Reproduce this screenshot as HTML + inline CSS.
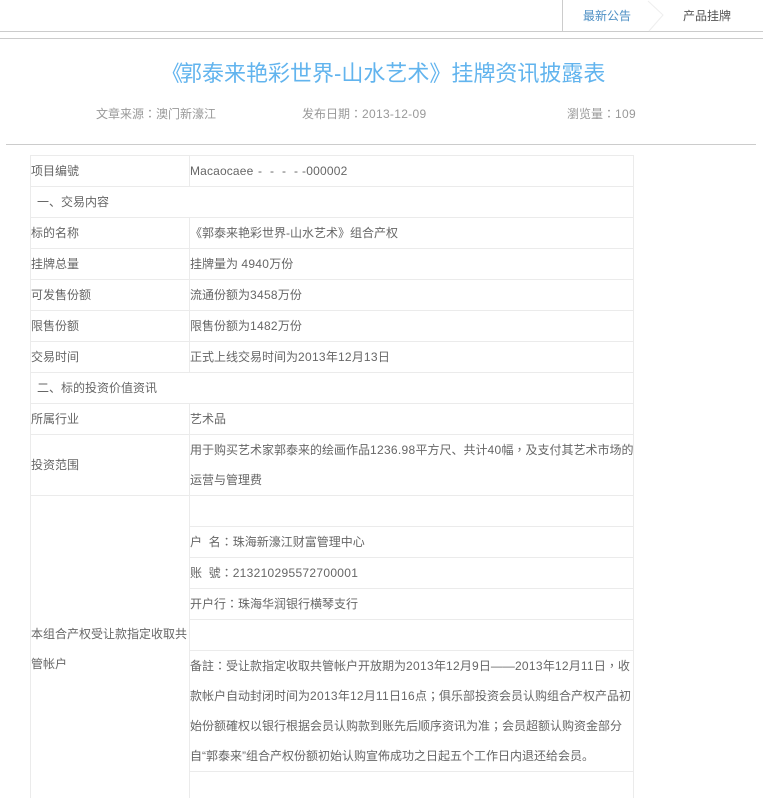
<!DOCTYPE html>
<html><head><meta charset="utf-8"><style>
html,body{margin:0;padding:0;background:#fff;width:763px;height:798px;overflow:hidden}
body{position:relative;font-family:"Liberation Sans","Noto Sans CJK SC",sans-serif;font-size:12px;color:#666}
.t{position:absolute;white-space:nowrap;line-height:18px;height:18px}
.h{position:absolute;background:#ebebeb;height:1px}
.v{position:absolute;background:#ebebeb;width:1px}
.g{position:absolute;background:#ccc}
.p{font-family:"Noto Sans CJK TC",sans-serif}
.d{letter-spacing:.3px}
</style></head><body>
<div class="g" style="left:0;top:31px;width:763px;height:1px"></div>
<div class="g" style="left:0;top:38px;width:763px;height:1px"></div>
<div class="g" style="left:562px;top:0;width:1px;height:31px"></div>
<svg style="position:absolute;left:645px;top:0" width="22" height="32"><path d="M3 1L18 15L4 31" fill="none" stroke="#eee"/></svg>
<div class="t" style="left:583px;top:7px;color:#4d8fc4">最新公告</div>
<div class="t" style="left:683px;top:7px;color:#555">产品挂牌</div>
<div class="t" style="left:161px;top:57px;height:34px;line-height:34px;font-size:22px;color:#62b4ee">《</div>
<div class="t" style="left:180px;top:57px;height:34px;line-height:34px;font-size:22px;color:#62b4ee">郭泰来艳彩世界-山水艺术》挂牌资讯披露表</div>
<div class="t" style="left:96px;top:105px;color:#999">文章来源<span class="p">：</span>澳门新濠江</div>
<div class="t" style="left:302px;top:105px;color:#999">发布日期<span class="p">：</span><span class="d">2013-12-09</span></div>
<div class="t" style="left:567px;top:105px;color:#999">瀏览量<span class="p">：</span><span class="d">109</span></div>
<div class="g" style="left:6px;top:144px;width:750px;height:1px"></div>

<div class="h" style="left:30px;top:155px;width:604px"></div>
<div class="h" style="left:30px;top:186px;width:604px"></div>
<div class="h" style="left:30px;top:217px;width:604px"></div>
<div class="h" style="left:30px;top:248px;width:604px"></div>
<div class="h" style="left:30px;top:279px;width:604px"></div>
<div class="h" style="left:30px;top:310px;width:604px"></div>
<div class="h" style="left:30px;top:341px;width:604px"></div>
<div class="h" style="left:30px;top:372px;width:604px"></div>
<div class="h" style="left:30px;top:403px;width:604px"></div>
<div class="h" style="left:30px;top:434px;width:604px"></div>
<div class="h" style="left:30px;top:495px;width:604px"></div>
<div class="h" style="left:189px;top:526px;width:445px"></div>
<div class="h" style="left:189px;top:557px;width:445px"></div>
<div class="h" style="left:189px;top:588px;width:445px"></div>
<div class="h" style="left:189px;top:619px;width:445px"></div>
<div class="h" style="left:189px;top:650px;width:445px"></div>
<div class="h" style="left:189px;top:771px;width:445px"></div>
<div class="v" style="left:30px;top:155px;height:643px"></div>
<div class="v" style="left:633px;top:155px;height:643px"></div>
<div class="v" style="left:189px;top:155px;height:31px"></div>
<div class="v" style="left:189px;top:217px;height:155px"></div>
<div class="v" style="left:189px;top:403px;height:395px"></div>

<div class="t" style="left:31px;top:162px">项目编號</div>
<div class="t" style="left:190px;top:162px;letter-spacing:.15px">Macaocaee</div>
<div class="t" style="left:258px;top:162px">-</div>
<div class="t" style="left:270px;top:162px">-</div>
<div class="t" style="left:282px;top:162px">-</div>
<div class="t" style="left:294px;top:162px">-</div>
<div class="t" style="left:302px;top:162px;letter-spacing:.2px">-000002</div>
<div class="t" style="left:37px;top:193px">一、交易内容</div>
<div class="t" style="left:31px;top:224px">标的名称</div>
<div class="t" style="left:190px;top:224px">《郭泰来艳彩世界-山水艺术》组合产权</div>
<div class="t" style="left:31px;top:255px">挂牌总量</div>
<div class="t" style="left:190px;top:255px">挂牌量为 <span class="d">4940</span>万份</div>
<div class="t" style="left:31px;top:286px">可发售份额</div>
<div class="t" style="left:190px;top:286px">流通份额为<span class="d">3458</span>万份</div>
<div class="t" style="left:31px;top:317px">限售份额</div>
<div class="t" style="left:190px;top:317px">限售份额为<span class="d">1482</span>万份</div>
<div class="t" style="left:31px;top:348px">交易时间</div>
<div class="t" style="left:190px;top:348px">正式上线交易时间为<span class="d">2013</span>年<span class="d">12</span>月<span class="d">13</span>日</div>
<div class="t" style="left:37px;top:379px">二、标的投资价值资讯</div>
<div class="t" style="left:31px;top:410px">所属行业</div>
<div class="t" style="left:190px;top:410px">艺术品</div>
<div class="t" style="left:31px;top:456px">投资范围</div>
<div class="t" style="left:190px;top:441px">用于购买艺术家郭泰来的绘画作品<span class="d">1236.98</span>平方尺、共计<span class="d">40</span>幅<span class="p">，</span>及支付其艺术市场的</div>
<div class="t" style="left:190px;top:471px">运营与管理费</div>
<div class="t" style="left:190px;top:533px">户 &nbsp;名<span class="p">：</span>珠海新濠江财富管理中心</div>
<div class="t" style="left:190px;top:564px">账 &nbsp;號<span class="p">：</span><span class="d">213210295572700001</span></div>
<div class="t" style="left:190px;top:595px">开户行<span class="p">：</span>珠海华润银行横琴支行</div>
<div class="t" style="left:31px;top:625px">本组合产权受让款指定收取共</div>
<div class="t" style="left:31px;top:655px">管帐户</div>
<div class="t" style="left:190px;top:657px">备註<span class="p">：</span>受让款指定收取共管帐户开放期为<span class="d">2013</span>年<span class="d">12</span>月<span class="d">9</span>日——<span class="d">2013</span>年<span class="d">12</span>月<span class="d">11</span>日<span class="p">，</span>收</div>
<div class="t" style="left:190px;top:687px">款帐户自动封闭时间为<span class="d">2013</span>年<span class="d">12</span>月<span class="d">11</span>日<span class="d">16</span>点<span class="p">；</span>俱乐部投资会员认购组合产权产品初</div>
<div class="t" style="left:190px;top:717px">始份额確权以银行根据会员认购款到账先后顺序资讯为准<span class="p">；</span>会员超额认购资金部分</div>
<div class="t" style="left:190px;top:747px">自“郭泰来”组合产权份额初始认购宣佈成功之日起五个工作日内退还给会员。</div>
</body></html>
